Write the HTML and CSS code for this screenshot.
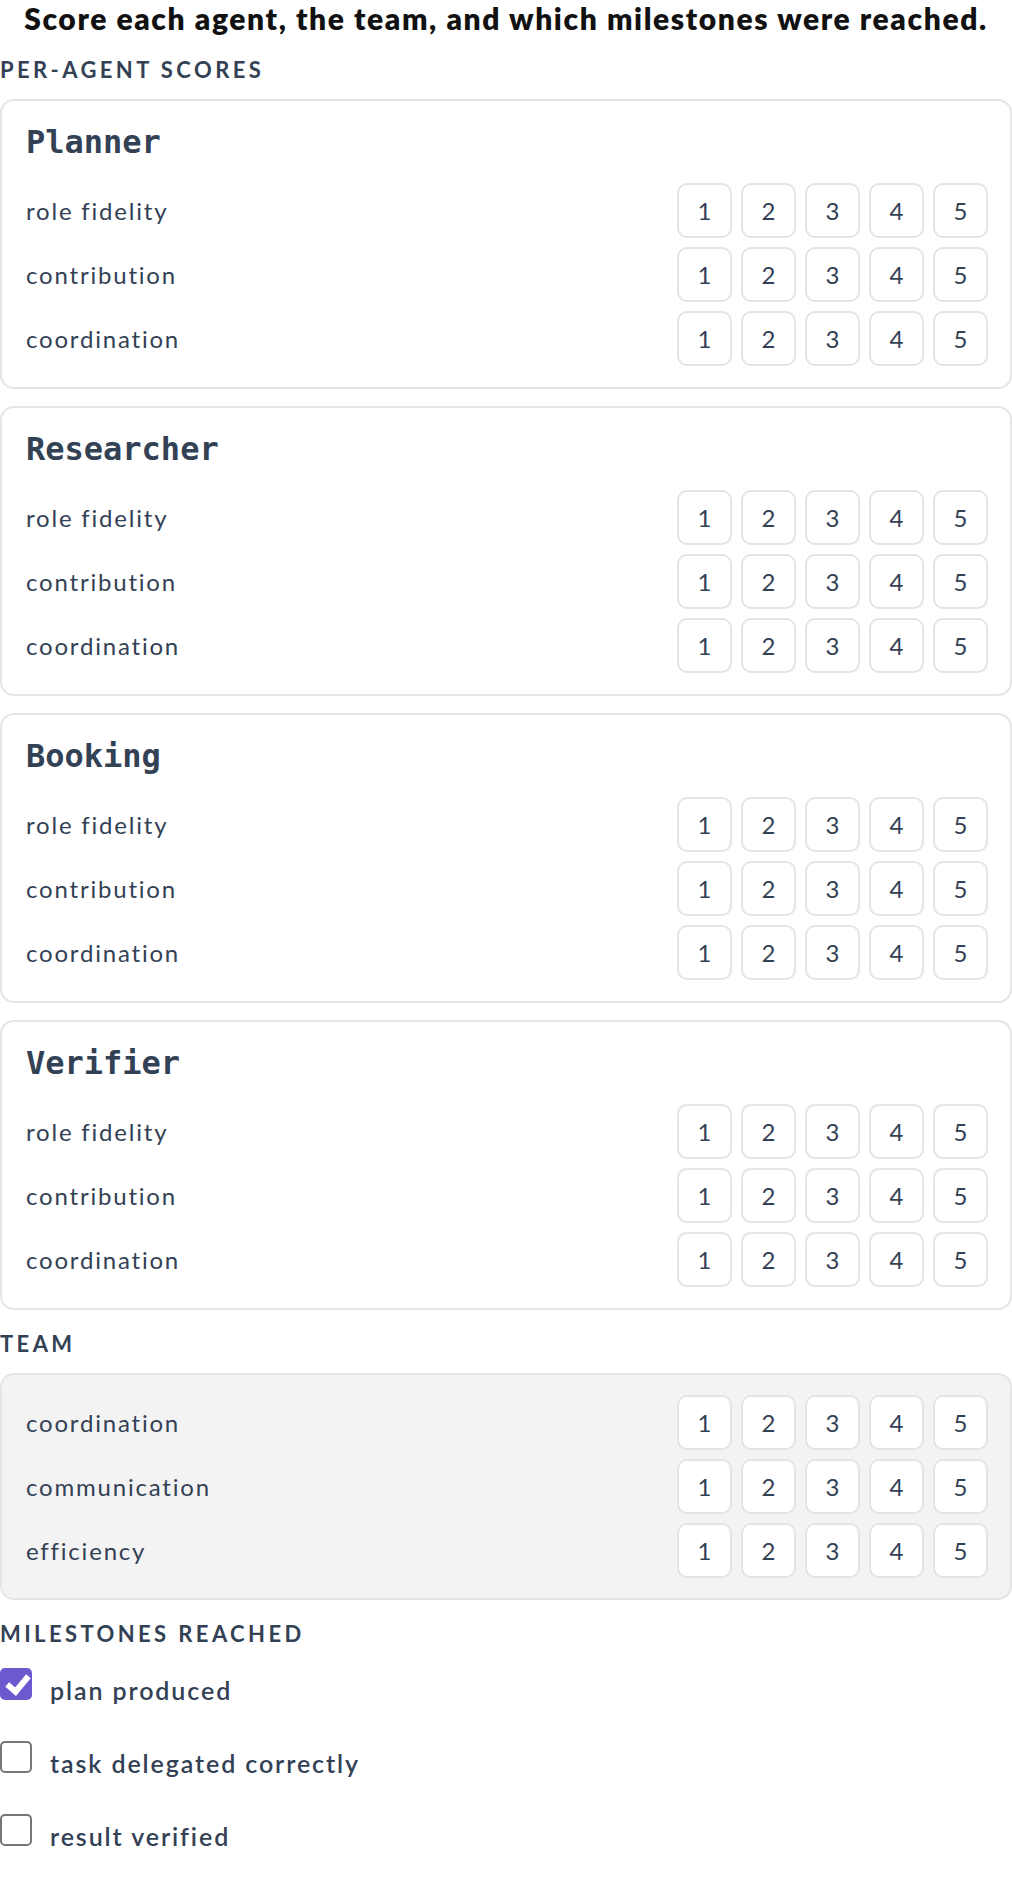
FILE: index.html
```html
<!DOCTYPE html>
<html lang="en">
<head>
    <meta charset="UTF-8">
    <meta name="viewport" content="width=device-width, initial-scale=1.0">
    <title>Agent Scoring</title>
    <link rel="stylesheet" href="styles.css">
</head>
<body>
    <h1 class="prompt">Score each agent, the team, and which milestones were reached.</h1>

    <h2 class="group-label">Per-agent scores</h2>
    <div class="agent-list">
        <div class="card">
            <h3 class="agent-name">Planner</h3>
            <div class="score-row">
                <span class="criterion">role fidelity</span>
                <div class="scale"><button class="score">1</button><button class="score">2</button><button class="score">3</button><button class="score">4</button><button class="score">5</button></div>
            </div>
            <div class="score-row">
                <span class="criterion">contribution</span>
                <div class="scale"><button class="score">1</button><button class="score">2</button><button class="score">3</button><button class="score">4</button><button class="score">5</button></div>
            </div>
            <div class="score-row">
                <span class="criterion">coordination</span>
                <div class="scale"><button class="score">1</button><button class="score">2</button><button class="score">3</button><button class="score">4</button><button class="score">5</button></div>
            </div>
        </div>
        <div class="card">
            <h3 class="agent-name">Researcher</h3>
            <div class="score-row">
                <span class="criterion">role fidelity</span>
                <div class="scale"><button class="score">1</button><button class="score">2</button><button class="score">3</button><button class="score">4</button><button class="score">5</button></div>
            </div>
            <div class="score-row">
                <span class="criterion">contribution</span>
                <div class="scale"><button class="score">1</button><button class="score">2</button><button class="score">3</button><button class="score">4</button><button class="score">5</button></div>
            </div>
            <div class="score-row">
                <span class="criterion">coordination</span>
                <div class="scale"><button class="score">1</button><button class="score">2</button><button class="score">3</button><button class="score">4</button><button class="score">5</button></div>
            </div>
        </div>
        <div class="card">
            <h3 class="agent-name">Booking</h3>
            <div class="score-row">
                <span class="criterion">role fidelity</span>
                <div class="scale"><button class="score">1</button><button class="score">2</button><button class="score">3</button><button class="score">4</button><button class="score">5</button></div>
            </div>
            <div class="score-row">
                <span class="criterion">contribution</span>
                <div class="scale"><button class="score">1</button><button class="score">2</button><button class="score">3</button><button class="score">4</button><button class="score">5</button></div>
            </div>
            <div class="score-row">
                <span class="criterion">coordination</span>
                <div class="scale"><button class="score">1</button><button class="score">2</button><button class="score">3</button><button class="score">4</button><button class="score">5</button></div>
            </div>
        </div>
        <div class="card">
            <h3 class="agent-name">Verifier</h3>
            <div class="score-row">
                <span class="criterion">role fidelity</span>
                <div class="scale"><button class="score">1</button><button class="score">2</button><button class="score">3</button><button class="score">4</button><button class="score">5</button></div>
            </div>
            <div class="score-row">
                <span class="criterion">contribution</span>
                <div class="scale"><button class="score">1</button><button class="score">2</button><button class="score">3</button><button class="score">4</button><button class="score">5</button></div>
            </div>
            <div class="score-row">
                <span class="criterion">coordination</span>
                <div class="scale"><button class="score">1</button><button class="score">2</button><button class="score">3</button><button class="score">4</button><button class="score">5</button></div>
            </div>
        </div>
    </div>

    <h2 class="group-label">Team</h2>
    <div class="card team-card">
        <div class="score-row">
            <span class="criterion">coordination</span>
            <div class="scale"><button class="score">1</button><button class="score">2</button><button class="score">3</button><button class="score">4</button><button class="score">5</button></div>
        </div>
        <div class="score-row">
            <span class="criterion">communication</span>
            <div class="scale"><button class="score">1</button><button class="score">2</button><button class="score">3</button><button class="score">4</button><button class="score">5</button></div>
        </div>
        <div class="score-row">
            <span class="criterion">efficiency</span>
            <div class="scale"><button class="score">1</button><button class="score">2</button><button class="score">3</button><button class="score">4</button><button class="score">5</button></div>
        </div>
    </div>

    <h2 class="group-label">Milestones reached</h2>
    <div class="milestones">
        <label class="milestone">
            <span class="box checked"></span>
            <span class="milestone-text">plan produced</span>
        </label>
        <label class="milestone">
            <span class="box"></span>
            <span class="milestone-text">task delegated correctly</span>
        </label>
        <label class="milestone">
            <span class="box"></span>
            <span class="milestone-text">result verified</span>
        </label>
    </div>
</body>
</html>
```

FILE: styles.css
```css
body {
    margin: 0;
    font-family: "Lato", "Liberation Sans", sans-serif;
    color: #334155;
    background-color: #fff;
}
.prompt {
    margin: 0 0 5px;
    text-align: center;
    font-size: 30px;
    line-height: 36px;
    font-weight: 800;
    letter-spacing: 1.6px;
    color: #111;
}
.group-label {
    margin: 22px 0 17px;
    font-size: 22px;
    line-height: 24px;
    font-weight: 700;
    letter-spacing: 3.4px;
    text-transform: uppercase;
    color: #334155;
}
.agent-list {
    display: flex;
    flex-direction: column;
    gap: 17px;
}
.card {
    display: flex;
    flex-direction: column;
    gap: 9px;
    padding: 22px 22px 21px 24px;
    border: 2px solid #e5e5e5;
    border-radius: 14px;
    background-color: #fff;
}
.team-card {
    padding: 20px 22px 20px 24px;
    background-color: #f3f3f3;
}
.agent-name {
    margin: 0 0 13px;
    font-family: "DejaVu Sans Mono", monospace;
    font-size: 32px;
    line-height: 38px;
    font-weight: 700;
    color: #334155;
}
.score-row {
    display: flex;
    justify-content: space-between;
    align-items: center;
}
.criterion {
    font-size: 24px;
    letter-spacing: 1.8px;
}
.scale {
    display: flex;
    gap: 9px;
}
.score {
    width: 55px;
    height: 55px;
    padding: 0;
    border: 2px solid #e4e4e4;
    border-radius: 10px;
    background-color: #fff;
    font-family: inherit;
    font-size: 24px;
    color: #334155;
    cursor: pointer;
}
.milestones {
    display: flex;
    flex-direction: column;
    gap: 36px;
    padding-top: 5px;
}
.milestone {
    display: flex;
    align-items: baseline;
    gap: 18px;
    cursor: pointer;
}
.box {
    position: relative;
    width: 32px;
    height: 32px;
    box-sizing: border-box;
    border: 2px solid #767676;
    border-radius: 5px;
    background-color: #fff;
}
.box.checked {
    border-color: #6d58d0;
    background-color: #6d58d0;
}
/* tick drawn as a rotated L */
.box.checked::after {
    content: "";
    position: absolute;
    left: 9px;
    top: 1px;
    width: 8px;
    height: 17px;
    border: solid #fff;
    border-width: 0 6px 6px 0;
    transform: rotate(40deg);
}
.milestone-text {
    font-size: 25px;
    line-height: 30px;
    font-weight: 600;
    letter-spacing: 1.9px;
}
```
